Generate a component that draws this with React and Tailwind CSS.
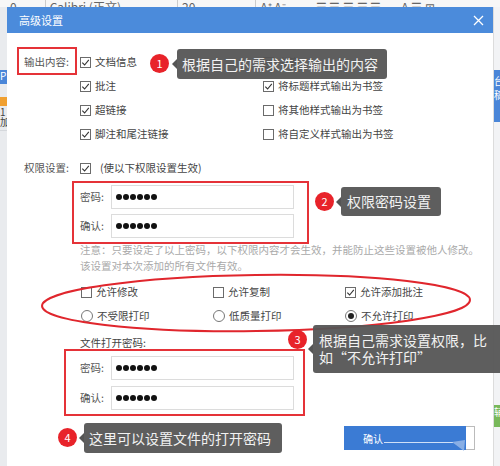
import React from 'react'

const FONT = "font-['Noto_Sans_CJK_SC','Microsoft_YaHei',sans-serif]"

function Box({ checked }) {
  return (
    <span className="w-[11px] h-[11px] border border-[#6b6b6b] bg-white flex items-center justify-center shrink-0">
      {checked && (
        <svg width="9" height="9" viewBox="0 0 9 9">
          <polyline points="1.3,4.6 3.6,7 7.8,1.8" fill="none" stroke="#333" strokeWidth="1.1" />
        </svg>
      )}
    </span>
  )
}

function Radio({ on }) {
  return (
    <span className="w-[12px] h-[12px] rounded-full border border-[#777] bg-white flex items-center justify-center shrink-0">
      {on && <span className="w-[6px] h-[6px] rounded-full bg-[#222]" />}
    </span>
  )
}

function Check({ checked, children }) {
  return (
    <div className="h-[24px] flex items-center gap-[4px]">
      <Box checked={checked} />
      <span>{children}</span>
    </div>
  )
}

function Dots() {
  return (
    <div className="flex items-center gap-[1px] pl-[4px]">
      {[0, 1, 2, 3, 4, 5].map((i) => (
        <span key={i} className="w-[6px] h-[6px] rounded-full bg-[#111]" />
      ))}
    </div>
  )
}

function PwRow({ label }) {
  return (
    <div className="flex items-center">
      <span className="w-[31px] text-[#555]">{label}</span>
      <div className="w-[183px] h-[24px] border border-[#dcdcdc] bg-white flex items-center">
        <Dots />
      </div>
    </div>
  )
}

function Badge({ n, className }) {
  return (
    <div className={`absolute w-[19px] h-[19px] rounded-full bg-[#e8232a] text-white text-[11px] flex items-center justify-center ${className}`}>
      {n}
    </div>
  )
}

function Tip({ className, children }) {
  return (
    <div className={`absolute bg-[#555555]/95 text-[#f2f2f2] text-[14px] leading-[17px] rounded-[3px] flex items-center ${className}`}>
      <span className="absolute left-[-5px] top-1/2 -translate-y-1/2 w-0 h-0 border-y-[5px] border-y-transparent border-r-[5px] border-r-[#555555]" />
      {children}
    </div>
  )
}

export default function App() {
  return (
    <div className={`relative w-[500px] h-[466px] overflow-hidden bg-[#eceef1] ${FONT}`}>
      {/* 背后的编辑器工具栏 */}
      <div className="h-[7px] bg-[#f7f7f7] overflow-hidden flex items-end text-[12px] text-[#666] leading-[14px]">
        <span className="ml-[10px] mb-[-7px]">0</span>
        <span className="ml-[28px] mb-[-7px] border-l border-[#ccc] pl-[4px]">Calibri (正文)</span>
        <span className="ml-[56px] mb-[-7px] border-l border-[#ccc] pl-[4px]">20</span>
        <span className="ml-[60px] mb-[-7px] border-l border-[#ccc] pl-[4px]">A⁺ A⁻</span>
        <span className="ml-[30px] mb-[-7px]">☰ ☰ ☰ ☰ ☰</span>
        <span className="ml-[20px] mb-[-7px]">A ☰ ⊞</span>
      </div>

      <div className="flex h-[459px]">
        {/* 左侧背景 */}
        <div className="w-[7px] bg-[#e9ebee] flex flex-col text-[10px] leading-[12px] text-white overflow-hidden">
          <div className="h-[63px]" />
          <div className="h-[14px] bg-[#4a86d8]">P</div>
          <div className="h-[13px]" />
          <div className="h-[9px] bg-[#f0a030]" />
          <div className="h-[10px] text-[#444]">1</div>
          <div className="h-[14px] text-[#444]">加</div>
          <div className="h-px bg-[#d5d8dc]" />
        </div>

        {/* 对话框 */}
        <div className="w-[486px] bg-white flex flex-col text-[10.5px] text-[#444]">
          <div className="h-[26px] bg-[#4b8bdb] flex items-center justify-between pl-[12px] pr-[9px] text-white text-[11px]">
            <span>高级设置</span>
            <svg width="11" height="11" viewBox="0 0 11 11">
              <path d="M1 1 L10 10 M10 1 L1 10" stroke="#fff" strokeWidth="1.3" />
            </svg>
          </div>

          <div className="flex flex-col">
            {/* 输出内容 */}
            <div className="mt-[17px] flex">
              <div className="w-[73px] pl-[17px] h-[24px] flex items-center text-[#555]">输出内容:</div>
              <div className="grid grid-cols-[183px_1fr]">
                <Check checked>文档信息</Check>
                <Check checked>书签</Check>
                <Check checked>批注</Check>
                <Check checked>将标题样式输出为书签</Check>
                <Check checked>超链接</Check>
                <Check>将其他样式输出为书签</Check>
                <Check checked>脚注和尾注链接</Check>
                <Check>将自定义样式输出为书签</Check>
              </div>
            </div>

            {/* 权限设置 */}
            <div className="mt-[10px] flex">
              <div className="w-[73px] pl-[17px] h-[24px] flex items-center text-[#555]">权限设置:</div>
              <div className="h-[24px] flex items-center gap-[9px]">
                <Box checked />
                <span>(使以下权限设置生效)</span>
              </div>
            </div>

            <div className="mt-[1px] ml-[65px] w-[237px] border-2 border-[#e53238] pl-[6px] pt-[2px] pb-[4px] flex flex-col gap-[5px]">
              <PwRow label="密码:" />
              <PwRow label="确认:" />
            </div>

            <div className="mt-[-2px] pl-[73px] text-[#a9a9a9] leading-[16px]">
              <div>注意：只要设定了以上密码，以下权限内容才会生效，并能防止这些设置被他人修改。</div>
              <div>该设置对本次添加的所有文件有效。</div>
            </div>

            <div className="mt-[6px] pl-[74px] grid grid-cols-[132px_132px_1fr]">
              <Check>允许修改</Check>
              <Check>允许复制</Check>
              <Check checked>允许添加批注</Check>
              <div className="h-[24px] flex items-center gap-[4px]"><Radio /><span>不受限打印</span></div>
              <div className="h-[24px] flex items-center gap-[4px]"><Radio /><span>低质量打印</span></div>
              <div className="h-[24px] flex items-center gap-[4px]"><Radio on /><span>不允许打印</span></div>
            </div>

            <div className="mt-[8px] pl-[73px] h-[14px] leading-[14px]">文件打开密码:</div>

            <div className="mt-[-1px] ml-[57px] w-[241px] border-2 border-[#e53238] pl-[14px] pt-[5px] pb-[4px] flex flex-col gap-[6px]">
              <PwRow label="密码:" />
              <PwRow label="确认:" />
            </div>

            <div className="mt-[10px] flex justify-end pr-[18px]">
              <div className="relative w-[131px] h-[24px] flex">
                <div className="w-[122px] h-full bg-[#3b7bd4] flex items-center pl-[19px] text-white text-[10px]">
                  <span>确认</span>
                  <span className="ml-[1px] w-[69px] h-px bg-[#cfe0f7] mt-[8px]" />
                </div>
                <div className="w-[9px] h-full bg-white border border-[#bbb] border-l-0" />
                <svg className="absolute left-[108px] top-[14px]" width="14" height="12" viewBox="0 0 14 12">
                  <polygon points="0,2 13,0 12,11" fill="#9dbde9" opacity="0.8" />
                </svg>
              </div>
            </div>
          </div>
        </div>

        {/* 右侧背景 */}
        <div className="w-[7px] bg-[#f2f3f5] border-l border-[#dcdcdc] flex flex-col text-[10px] leading-[14px] text-white overflow-hidden">
          <div className="h-[63px]" />
          <div className="h-[52px] bg-[#4a86d8] pt-[4px]">台<br />稿</div>
          <div className="h-[283px]" />
          <div className="h-[22px] bg-[#78b85a]">辅</div>
        </div>
      </div>

      {/* 标注 */}
      <div className="absolute left-[17px] top-[47px] w-[60px] h-[28px] border-2 border-[#e53238]" />

      <svg className="absolute left-0 top-0 pointer-events-none" width="500" height="466">
        <ellipse cx="256" cy="303" rx="214" ry="28" fill="none" stroke="#e0262d" strokeWidth="2" transform="rotate(-0.8 256 303)" />
      </svg>

      <Badge n="1" className="left-[150px] top-[54px]" />
      <Tip className="left-[177px] top-[49px] w-[210px] h-[30px] pl-[5px]">根据自己的需求选择输出的内容</Tip>

      <Badge n="2" className="left-[315px] top-[192px]" />
      <Tip className="left-[341px] top-[187px] w-[100px] h-[29px] pl-[6px]">权限密码设置</Tip>

      <Badge n="3" className="left-[288px] top-[330px]" />
      <Tip className="left-[313px] top-[325px] w-[190px] h-[48px] pl-[6px]">
        <div className="flex flex-col">
          <span>根据自己需求设置权限，比</span>
          <span>如“不允许打印”</span>
        </div>
      </Tip>

      <Badge n="4" className="left-[58px] top-[428px]" />
      <Tip className="left-[84px] top-[423px] w-[198px] h-[30px] pl-[5px]">这里可以设置文件的打开密码</Tip>
    </div>
  )
}
